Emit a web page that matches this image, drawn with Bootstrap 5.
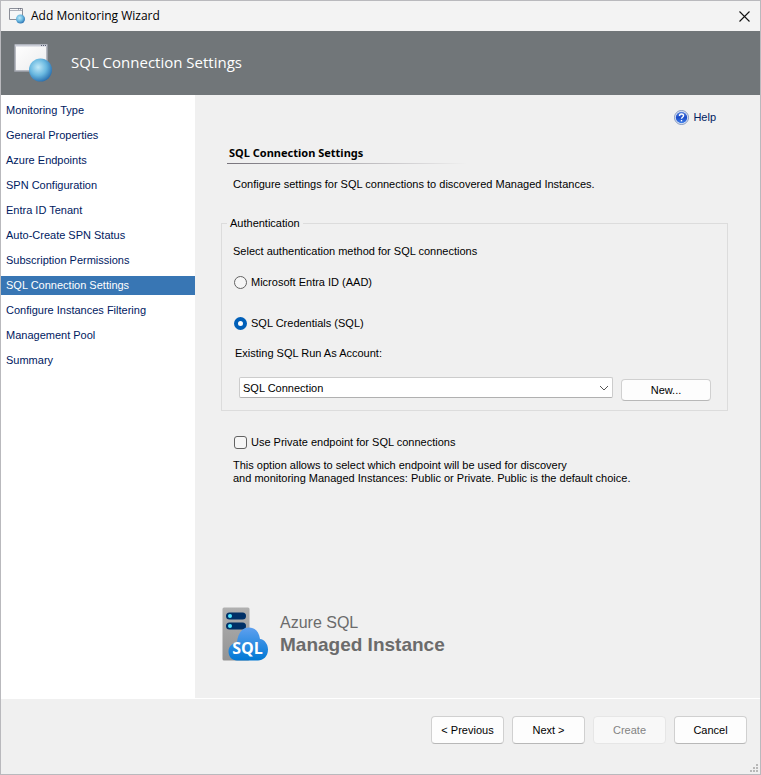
<!DOCTYPE html>
<html lang="en">
<head>
<meta charset="utf-8">
<meta name="viewport" content="width=device-width, initial-scale=1">
<title>Add Monitoring Wizard</title>
<link href="https://cdn.jsdelivr.net/npm/bootstrap@5.3.0/dist/css/bootstrap.min.css" rel="stylesheet">
<style>
  body { font-family: "Liberation Sans", Arial, sans-serif; font-size: 11px; line-height: 16px; color: #000; background: #f0f0f0; }
  .wizard { border: 1px solid #b9b9bd; }
  .titlebar { background: #f3f3f3; height: 30px; padding: 0 10px 0 8px; font-family: "Open Sans", "Noto Sans", sans-serif; font-size: 12px; }
  .titlebar-text { margin-left: 6px; }
  .close-btn { line-height: 0; }
  .banner { background: #717679; color: #fff; height: 64px; padding: 0 12px 2px; gap: 18px; font-family: "Open Sans", "Noto Sans", sans-serif; }
  .banner h1 { font-size: 15px; line-height: 24px; }
  .steps { width: 194px; background: #fff; padding-top: 6px; gap: 6px; }
  .steps a { padding: 0 5px; line-height: 19px; color: #00205f; text-decoration: none; }
  .steps a.active { background: #3876b4; color: #fff; }
  .page { padding: 12px 32px 37px 26px; }
  .help { gap: 4px; margin-right: 12px; color: #00205f; text-decoration: none; line-height: 20px; }
  .page h2 { font-family: "Noto Sans", "Open Sans", sans-serif; font-size: 11px; line-height: 18px; font-weight: 700; margin: 17px 0 0 6px; padding-left: 2px; padding-bottom: 2px; width: 240px; background: linear-gradient(90deg, #77737b, #f0f0f0) bottom / 100% 1px no-repeat; }
  .intro { margin: 12px 0 23px 12px; }
  .group { border: 1px solid #dcdcdc; padding: 0 16px 12px 11px; }
  .group legend { font-size: 11px; line-height: 16px; margin-left: -6px; padding: 0 3px; }
  .choice { gap: 4px; margin-left: 1px; }
  .choice-entra { margin-top: 15px; }
  .choice-sql { margin-top: 25px; }
  .choice-private { margin: 23px 0 0 13px; }
  .choice .form-check-input { width: 13px; height: 13px; margin: 0; border-color: #626262; background-color: #f6f6f6; box-shadow: none; }
  .choice .form-check-input[type=radio]:checked { border: 4px solid #005fb8; background: #fff; }
  .choice .form-check-input[type=checkbox] { border-radius: 3px; }
  .choice .form-check-input[type=checkbox]:checked { background-color: #005fb8; border-color: #005fb8; }
  .account-label { margin: 14px 0 0 2px; }
  .account { gap: 8px; padding-left: 6px; margin-top: 16px; }
  .account .form-select { font-size: 11px; line-height: 16px; height: 21px; padding: 0 24px 0 3px; color: #000; border: 1px solid #ccc; border-bottom-color: #b0b0b0; border-radius: 2px; background-position: right 3px center; background-size: 10px 10px;
    background-image: url("data:image/svg+xml,%3Csvg xmlns='http://www.w3.org/2000/svg' viewBox='0 0 10 10'%3E%3Cpath d='M1 3l4 4 4-4' fill='none' stroke='%23555'/%3E%3C/svg%3E"); }
  .push { font-size: 11px; line-height: 16px; color: #000; background: #fdfdfd; border: 1px solid #d0d0d0; border-bottom-color: #b8b8b8; border-radius: 4px; padding: 0; width: 73px; height: 28px; }
  .push:disabled { color: #838383; background: #f8f8f8; border-color: #e6e6e6; opacity: 1; }
  .push-new { width: 90px; height: 22px; margin-top: 2px; margin-bottom: -4px; }
  .note { line-height: 13px; margin: 9px 0 0 12px; }
  .product { gap: 12px; color: #6b6b6b; }
  .product .family { font-size: 16px; line-height: 20px; padding-top: 1px; }
  .product .edition { font-size: 19px; line-height: 24px; font-weight: 700; }
  .actions { border-top: 1px solid #fff; padding: 17px 13px 30px; gap: 8px; }
  .grip { right: 2px; bottom: 2px; line-height: 0; }
</style>
</head>
<body>
<div class="wizard d-flex flex-column min-vh-100">
  <header>
    <div class="titlebar d-flex align-items-center">
      <svg width="16" height="16" viewBox="0 0 16 16" aria-hidden="true">
        <defs><radialGradient id="orb" cx=".4" cy=".38" r=".65"><stop offset="0" stop-color="#bfe8f8"/><stop offset=".55" stop-color="#69b8e0"/><stop offset="1" stop-color="#2a70b0"/></radialGradient></defs>
        <path d="M.5.5h13v11H.5z" fill="#f6f6f7" stroke="#8b8e98"/><path d="M1 2.500h12" stroke="#aeb1bb"/><path d="M9 1h1m1 0h1" stroke="#555b70"/>
        <circle cx="11.500" cy="11" r="4.500" fill="url(#orb)"/>
      </svg>
      <span class="titlebar-text flex-grow-1">Add Monitoring Wizard</span>
      <button type="button" class="close-btn btn p-0 border-0" aria-label="Close">
        <svg width="11" height="11" viewBox="0 0 11 11"><path d="M.5.5l10 10m0-10l-10 10" stroke="#111" stroke-width="1.100"/></svg>
      </button>
    </div>
    <div class="banner d-flex align-items-center">
      <svg width="40" height="40" viewBox="0 0 40 40" aria-hidden="true">
        <defs><linearGradient id="pane" x2="1" y2="1"><stop offset="0" stop-color="#fff"/><stop offset="1" stop-color="#ececed"/></linearGradient></defs>
        <path d="M2 3h32v26H2z" fill="url(#pane)" stroke="#a3a6b0" stroke-width="1.500"/>
        <path d="M2 3.500h32" stroke="#c9ccd6" stroke-width="2"/><path d="M28 3.500h1m1 0h1m1 0h1" stroke="#555b70"/>
        <circle cx="27.500" cy="28" r="11.500" fill="url(#orb)"/>
      </svg>
      <h1 class="m-0 fw-normal">SQL Connection Settings</h1>
    </div>
  </header>

  <div class="d-flex flex-grow-1">
    <nav class="steps d-flex flex-column flex-shrink-0" aria-label="Wizard steps">
      <a href="#">Monitoring Type</a>
      <a href="#">General Properties</a>
      <a href="#">Azure Endpoints</a>
      <a href="#">SPN Configuration</a>
      <a href="#">Entra ID Tenant</a>
      <a href="#">Auto-Create SPN Status</a>
      <a href="#">Subscription Permissions</a>
      <a href="#" class="active" aria-current="step">SQL Connection Settings</a>
      <a href="#">Configure Instances Filtering</a>
      <a href="#">Management Pool</a>
      <a href="#">Summary</a>
    </nav>

    <main class="page d-flex flex-column flex-grow-1">
      <a href="#" class="help d-flex align-items-center align-self-end">
        <svg width="15" height="15" viewBox="0 0 15 15" aria-hidden="true">
          <defs><linearGradient id="helpFill" x2="0" y2="1"><stop offset="0" stop-color="#5b86e0"/><stop offset=".5" stop-color="#1c4cc8"/><stop offset="1" stop-color="#3f7fe8"/></linearGradient></defs>
          <circle cx="7.500" cy="7.500" r="7" fill="#e9eef8" stroke="#8096c0"/><circle cx="7.500" cy="7.500" r="5.700" fill="url(#helpFill)"/>
          <path d="M5.500 6c0-2.600 4-2.600 4-.3 0 1.500-2 1.500-2 3.100" fill="none" stroke="#fff" stroke-width="1.400"/><path d="M6.800 10h1.400v1.400H6.800z" fill="#fff"/>
        </svg>
        <span>Help</span>
      </a>
      <h2>SQL Connection Settings</h2>
      <p class="intro">Configure settings for SQL connections to discovered Managed Instances.</p>

      <fieldset class="group">
        <legend class="float-none w-auto mb-0">Authentication</legend>
        <p class="mb-0 mt-2 pt-1">Select authentication method for SQL connections</p>
        <div class="choice choice-entra d-flex align-items-center">
          <input class="form-check-input" type="radio" name="auth" id="authEntra">
          <label for="authEntra">Microsoft Entra ID (AAD)</label>
        </div>
        <div class="choice choice-sql d-flex align-items-center">
          <input class="form-check-input" type="radio" name="auth" id="authSql" checked>
          <label for="authSql">SQL Credentials (SQL)</label>
        </div>
        <label for="account" class="account-label d-block">Existing SQL Run As Account:</label>
        <div class="account d-flex">
          <select class="form-select" id="account"><option>SQL Connection</option></select>
          <button type="button" class="btn push push-new flex-shrink-0">New...</button>
        </div>
      </fieldset>

      <div class="choice choice-private d-flex align-items-center">
        <input class="form-check-input" type="checkbox" id="private">
        <label for="private">Use Private endpoint for SQL connections</label>
      </div>
      <p class="note">This option allows to select which endpoint will be used for discovery<br>and monitoring Managed Instances: Public or Private. Public is the default choice.</p>

      <div class="product d-flex align-items-center mt-auto">
        <svg width="47" height="54" viewBox="0 0 47 54" aria-hidden="true">
          <defs>
            <linearGradient id="rack" x2="0" y2="1"><stop offset="0" stop-color="#b0b0b0"/><stop offset="1" stop-color="#949494"/></linearGradient>
            <linearGradient id="cloud" x2="0" y2="1"><stop offset="0" stop-color="#5ea0ef"/><stop offset="1" stop-color="#0078d4"/></linearGradient>
          </defs>
          <rect x="1.500" y=".5" width="27" height="53" rx="1.500" fill="url(#rack)"/>
          <rect x="5" y="5.500" width="20" height="7" rx="3.500" fill="#003067"/><rect x="5" y="15.500" width="20" height="7" rx="3.500" fill="#003067"/>
          <circle cx="9" cy="9" r="2" fill="#50e6ff"/><circle cx="9" cy="19" r="2" fill="#50e6ff"/>
          <path d="M16 53.500C11 53.500 7.500 49.500 7.500 44.500c0-5 4-8.500 8.500-9C17 25 22 20.500 28 20.500c6 0 10 4 11 11.500 4.500.5 8 5 8 10.500C47 49.500 42 53.500 37 53.500z" fill="url(#cloud)"/>
          <text x="26.500" y="47" text-anchor="middle" font-family="Open Sans, sans-serif" font-weight="700" font-size="16" fill="#fff">SQL</text>
        </svg>
        <div><div class="family">Azure SQL</div><div class="edition">Managed Instance</div></div>
      </div>
    </main>
  </div>

  <footer class="actions d-flex justify-content-end position-relative">
    <button type="button" class="btn push">&lt; Previous</button>
    <button type="button" class="btn push">Next &gt;</button>
    <button type="button" class="btn push" disabled>Create</button>
    <button type="button" class="btn push">Cancel</button>
    <span class="grip position-absolute"><svg width="8" height="8" viewBox="0 0 8 8" aria-hidden="true"><path d="M6 0h2v2H6zM3 3h2v2H3zM6 3h2v2H6zM0 6h2v2H0zM3 6h2v2H3zM6 6h2v2H6z" fill="#b8b8b8"/></svg></span>
  </footer>
</div>
<script src="https://cdn.jsdelivr.net/npm/bootstrap@5.3.0/dist/js/bootstrap.bundle.min.js"></script>
</body>
</html>
